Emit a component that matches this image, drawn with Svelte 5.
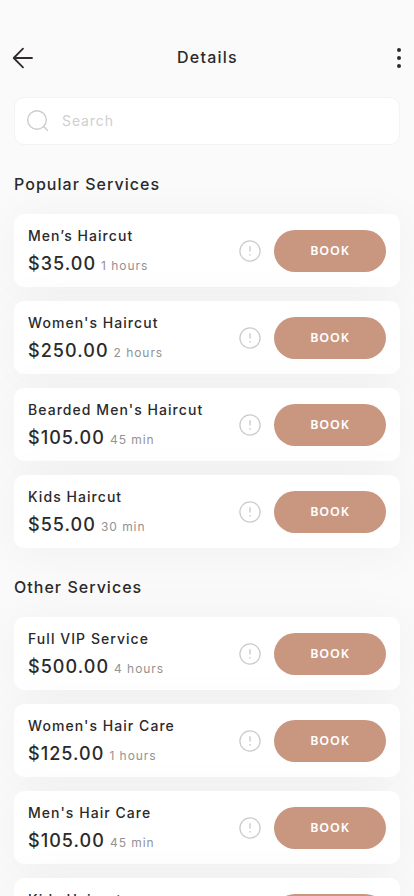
<script>
  const sections = [
    {
      title: 'Popular Services',
      items: [
        { name: 'Men’s Haircut', price: '$35.00', time: '1 hours' },
        { name: "Women's Haircut", price: '$250.00', time: '2 hours' },
        { name: "Bearded Men's Haircut", price: '$105.00', time: '45 min' },
        { name: 'Kids Haircut', price: '$55.00', time: '30 min' }
      ]
    },
    {
      title: 'Other Services',
      items: [
        { name: 'Full VIP Service', price: '$500.00', time: '4 hours' },
        { name: "Women's Hair Care", price: '$125.00', time: '1 hours' },
        { name: "Men's Hair Care", price: '$105.00', time: '45 min' },
        { name: 'Kids Haircut', price: '$55.00', time: '30 min' }
      ]
    }
  ];
</script>

<main class="screen">
  <header>
    <button class="icon" aria-label="Back">
      <svg width="22" height="22" viewBox="0 0 22 22" fill="none" stroke="#2f2b2e" stroke-width="1.8" stroke-linecap="round" stroke-linejoin="round">
        <path d="M20 11H1.8M11 1.7L1.7 11l9.3 9.3" />
      </svg>
    </button>
    <h1>Details</h1>
    <button class="icon" aria-label="More">
      <svg width="4" height="20" viewBox="0 0 4 20" fill="#2f2b2e">
        <circle cx="2" cy="2" r="2" /><circle cx="2" cy="10" r="2" /><circle cx="2" cy="18" r="2" />
      </svg>
    </button>
  </header>

  <div class="search">
    <svg width="24" height="24" viewBox="0 0 24 24" fill="none" stroke="#cdcdcd" stroke-width="1.4" stroke-linecap="round">
      <circle cx="11" cy="11" r="9.3" /><path d="M17.6 17.6L21.6 21.6" />
    </svg>
    <span>Search</span>
  </div>

  {#each sections as section}
    <section>
      <h2>{section.title}</h2>
      <div class="list">
        {#each section.items as item}
          <article>
            <div class="info">
              <h3>{item.name}</h3>
              <p><strong>{item.price}</strong><small>{item.time}</small></p>
            </div>
            <svg class="alert" width="22" height="22" viewBox="0 0 22 22" fill="none" stroke="#cbcbcb" stroke-width="1.3">
              <circle cx="11" cy="11" r="10.1" />
              <path d="M11 6.2v5.4M11 14v1.4" stroke-width="1.4" />
            </svg>
            <button class="book">BOOK</button>
          </article>
        {/each}
      </div>
    </section>
  {/each}
</main>

<style>
  :global(body) {
    margin: 0;
    background: #fafafa;
  }
  .screen {
    box-sizing: border-box;
    width: 414px;
    height: 896px;
    padding: 0 14px;
    overflow: hidden;
    background: #fafafa;
    color: #2b2a2b;
    font-family: Inter, 'Liberation Sans', sans-serif;
  }
  header {
    display: flex;
    align-items: center;
    justify-content: space-between;
    height: 22px;
    margin: 47px -1px 0 -2px;
  }
  .icon {
    display: flex;
    width: 22px;
    padding: 0;
    border: 0;
    background: none;
  }
  .icon:last-child {
    width: 4px;
  }
  h1, h2, h3, p {
    margin: 0;
  }
  h1 {
    margin-left: -16px;
    padding-bottom: 2px;
    font-size: 16px;
    line-height: 22px;
    font-weight: 500;
    letter-spacing: 1.25px;
  }
  .search {
    box-sizing: border-box;
    display: flex;
    align-items: center;
    gap: 12px;
    height: 48px;
    margin-top: 28px;
    padding-left: 11px;
    border: 1px solid #f3f3f3;
    border-radius: 10px;
    background: #fff;
    color: #cfcfcf;
    font-size: 14px;
    letter-spacing: 0.9px;
  }
  .search span {
    padding-bottom: 2px;
  }
  h2 {
    padding-top: 28px;
    height: 41px;
    font-size: 16px;
    line-height: 22px;
    font-weight: 450;
    letter-spacing: 1.03px;
  }
  .list {
    display: flex;
    flex-direction: column;
    gap: 14px;
  }
  article {
    box-sizing: border-box;
    display: flex;
    align-items: center;
    height: 73px;
    padding: 2px 14px 0;
    border-radius: 10px;
    background: #fff;
    box-shadow: 0 4px 50px rgba(0, 0, 0, 0.045);
  }
  .info {
    flex: 1;
  }
  h3 {
    font-size: 14px;
    line-height: 18px;
    font-weight: 450;
    letter-spacing: 1.05px;
  }
  p {
    display: flex;
    align-items: baseline;
    gap: 5px;
    margin: 7px 0 -1px;
    line-height: 24px;
  }
  strong {
    font-size: 18px;
    font-weight: 500;
    letter-spacing: 1.05px;
  }
  small {
    color: #929292;
    font-size: 12px;
    letter-spacing: 0.95px;
  }
  .alert {
    margin: 0 13px 2px 0;
  }
  .book {
    width: 112px;
    height: 42px;
    margin-bottom: 2px;
    padding: 0;
    border: 0;
    border-radius: 21px;
    background: #c9977f;
    color: #fff;
    font-family: 'Noto Sans', Inter, sans-serif;
    font-size: 12.5px;
    font-weight: 600;
    letter-spacing: 0.9px;
  }
</style>
